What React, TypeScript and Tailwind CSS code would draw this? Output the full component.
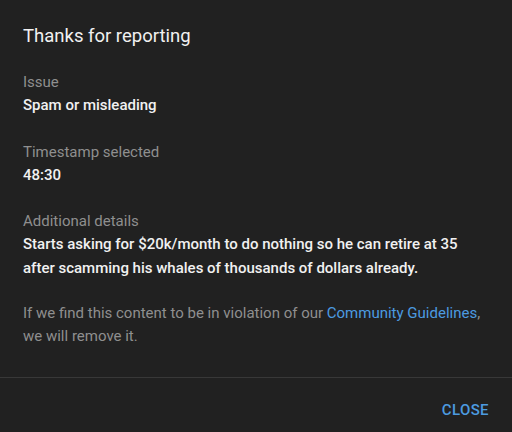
export default function App() {
  return (
    <div className="w-[512px] h-[432px] overflow-hidden bg-[#212121] font-['Roboto',sans-serif] flex flex-col">
      <div className="pl-[23px] pr-6 pt-6">
        <h1 className="text-[18.5px] leading-6 text-[#f1f1f1]">Thanks for reporting</h1>

        <div className="mt-[23px]">
          <div className="text-[15px] leading-[22px] text-[#8f8f8f]">Issue</div>
          <div className="text-[15px] leading-6 font-medium text-[#f1f1f1]">Spam or misleading</div>
        </div>

        <div className="mt-6">
          <div className="text-[15px] leading-[22px] text-[#8f8f8f]">Timestamp selected</div>
          <div className="text-[15px] leading-6 font-medium text-[#f1f1f1]">48:30</div>
        </div>

        <div className="mt-[23px]">
          <div className="text-[15px] leading-[22px] text-[#8f8f8f]">Additional details</div>
          <div className="text-[15px] leading-6 font-medium text-[#f1f1f1]">
            Starts asking for $20k/month to do nothing so he can retire at 35
            <br />
            after scamming his whales of thousands of dollars already.
          </div>
        </div>

        <p className="mt-[22px] text-[15px] leading-[23px] text-[#8f8f8f]">
          If we find this content to be in violation of our{" "}
          <a className="text-[#4c9be0]">Community Guidelines</a>,
          <br />
          we will remove it.
        </p>
      </div>

      <div className="mt-[29px] border-t border-[#383838] flex justify-end px-[23px] pt-[22px]">
        <button className="text-[15px] leading-5 font-medium uppercase tracking-[0.4px] text-[#4c9be0]">Close</button>
      </div>
    </div>
  );
}
